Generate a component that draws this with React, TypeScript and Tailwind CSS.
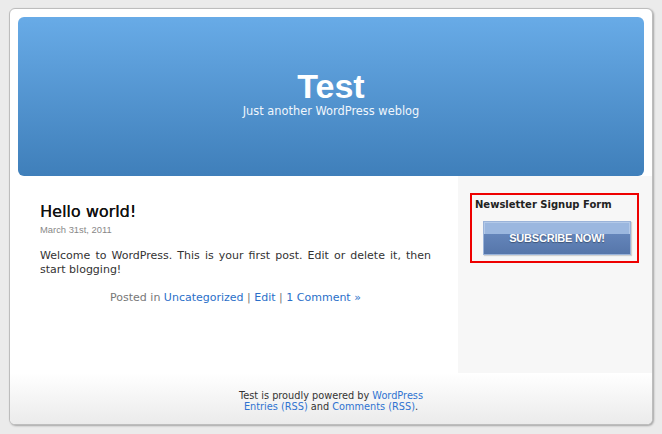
import React from "react";

const dv = { fontFamily: '"DejaVu Sans", Verdana, sans-serif' };
const lib = { fontFamily: '"Liberation Sans", Arial, sans-serif' };

export default function App() {
  return (
    <div className="w-[662px] h-[434px] bg-[#ebebeb] pt-[8px] pl-[9px] overflow-hidden">
      <div className="w-[644px] h-[417px] bg-white border border-[#bdbdbd] rounded-[6px] shadow-[1px_1px_2px_rgba(0,0,0,0.3)] flex flex-col overflow-hidden">
        {/* header */}
        <div className="px-[8px] pt-[8px]">
          <div className="h-[159px] rounded-[6px] bg-gradient-to-b from-[#68abe7] to-[#3f7fba] flex flex-col items-center pt-[51px] text-white">
            <div className="text-[34px] font-bold leading-[36px]" style={lib}>
              Test
            </div>
            <div className="text-[11.4px] leading-[14px] text-[#f0f6fc]" style={dv}>
              Just another WordPress weblog
            </div>
          </div>
        </div>
        {/* main row */}
        <div className="flex h-[197px]">
          <div className="flex-1 pl-[30px] pr-[27px] pt-[26px]">
            <div className="text-[16px] leading-[20px] text-[#111] [text-shadow:0.3px_0_0_#111]" style={dv}>
              Hello world!
            </div>
            <div className="text-[9.4px] leading-[12px] text-[#888] mt-[2px]" style={lib}>
              March 31st, 2011
            </div>
            <p className="text-[11px] leading-[14px] text-[#333] mt-[13px] text-justify" style={dv}>
              Welcome to WordPress. This is your first post. Edit or delete it, then start blogging!
            </p>
            <div className="text-[11px] leading-[14px] text-[#777] mt-[14px] text-center" style={dv}>
              Posted in <span className="text-[#2a6fc9]">Uncategorized</span> |{" "}
              <span className="text-[#2a6fc9]">Edit</span> |{" "}
              <span className="text-[#2a6fc9]">1 Comment »</span>
            </div>
          </div>
          <div className="w-[194px] bg-[#f7f7f7] pt-[17px] pl-[12px]">
            <div className="w-[169px] h-[70px] border-2 border-[#ee0000] pt-[3px] pl-[3px]">
              <div className="text-[10px] leading-[13px] font-bold text-[#222]" style={dv}>
                Newsletter Signup Form
              </div>
              <div className="mt-[10px] ml-[8px] w-[148px] h-[34px] border border-[#9ab3d9] bg-[#5e7fb4] flex flex-col shadow-[1px_1px_1px_rgba(0,0,0,0.15)] relative">
                <div className="h-[12px] bg-[#9bb7df] border-t border-x border-[#b3c9e8]"></div>
                <div className="flex-1 bg-gradient-to-b from-[#6485ba] to-[#5676aa]"></div>
                <div
                  className="absolute inset-0 flex items-center justify-center text-white text-[11px] font-bold tracking-[-0.2px] [text-shadow:0_1px_1px_rgba(0,0,0,0.35)]"
                  style={lib}
                >
                  SUBSCRIBE NOW!
                </div>
              </div>
            </div>
          </div>
        </div>
        {/* footer */}
        <div className="flex-1 bg-gradient-to-b from-white to-[#ebebeb] pt-[17px] text-center text-[9.75px] leading-[11px] text-[#333]" style={dv}>
          <div>
            Test is proudly powered by <span className="text-[#2f73d1]">WordPress</span>
          </div>
          <div>
            <span className="text-[#2f73d1]">Entries (RSS)</span> and{" "}
            <span className="text-[#2f73d1]">Comments (RSS)</span>.
          </div>
        </div>
      </div>
    </div>
  );
}
